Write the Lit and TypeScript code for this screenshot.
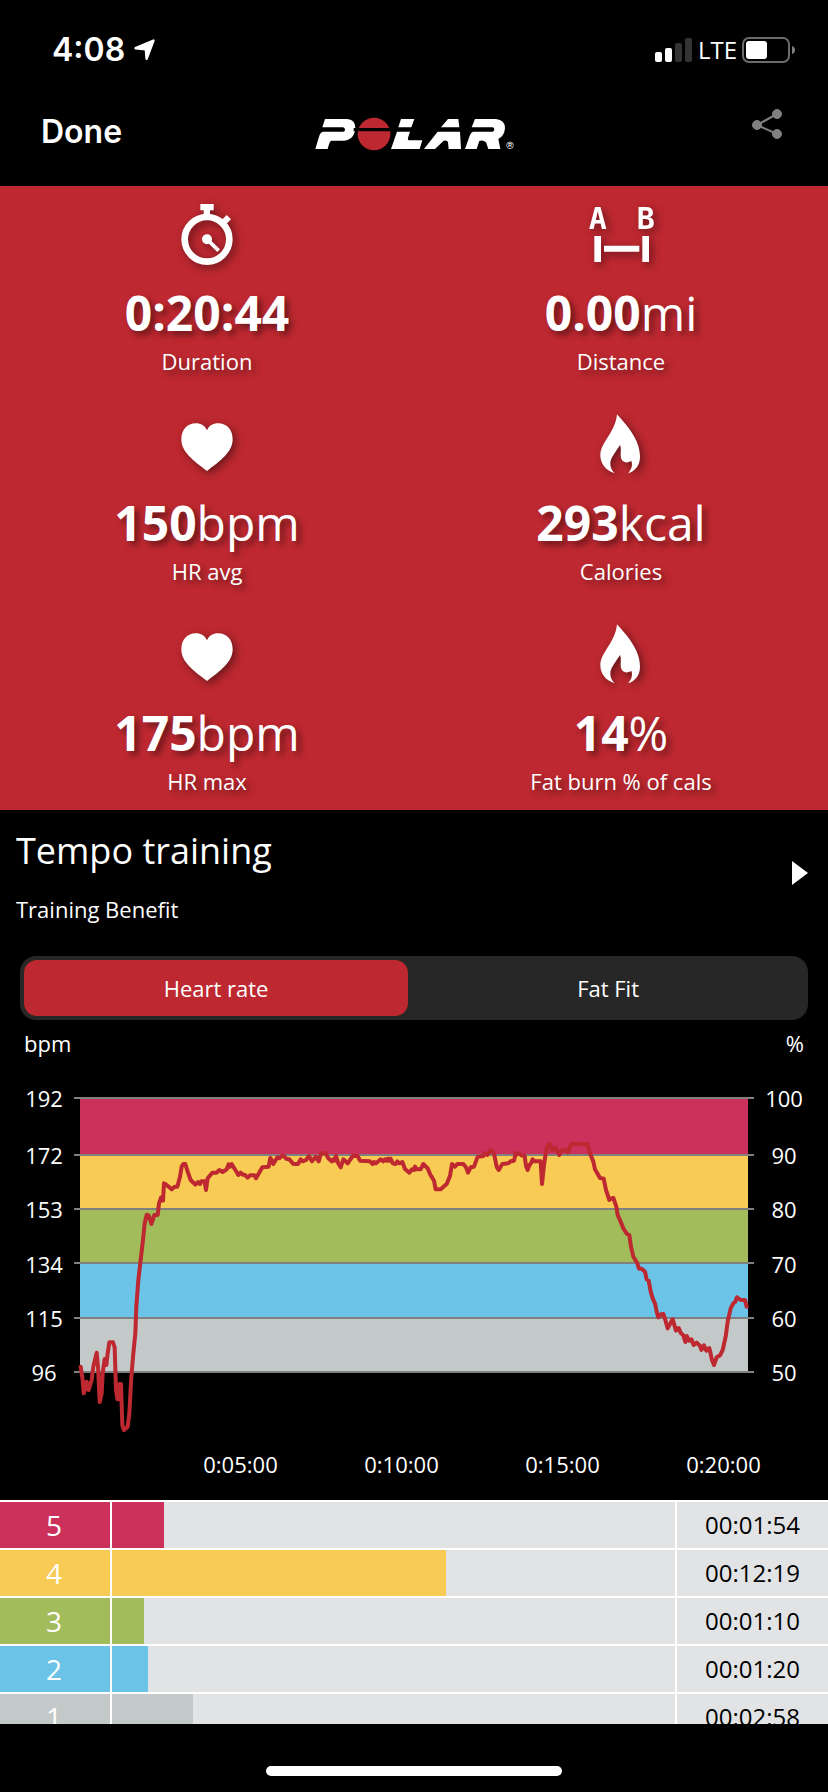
import { LitElement, html, css, svg } from "lit";
import { customElement, state } from "lit/decorators.js";

type Point = [number, number];

interface Stat {
  icon: "watch" | "distance" | "heart" | "flame";
  value: string;
  unit: string;
  label: string;
}

interface Zone {
  level: number;
  tone: string;
  seconds: number;
}

const STATS: Stat[] = [
  { icon: "watch", value: "0:20:44", unit: "", label: "Duration" },
  { icon: "distance", value: "0.00", unit: "mi", label: "Distance" },
  { icon: "heart", value: "150", unit: "bpm", label: "HR avg" },
  { icon: "flame", value: "293", unit: "kcal", label: "Calories" },
  { icon: "heart", value: "175", unit: "bpm", label: "HR max" },
  { icon: "flame", value: "14", unit: "%", label: "Fat burn % of cals" },
];

const ZONES: Zone[] = [
  { level: 5, tone: "z5", seconds: 114 },
  { level: 4, tone: "z4", seconds: 739 },
  { level: 3, tone: "z3", seconds: 70 },
  { level: 2, tone: "z2", seconds: 80 },
  { level: 1, tone: "z1", seconds: 178 },
];

const SESSION_SECONDS = 1244;
const BPM_TICKS = [192, 172, 153, 134, 115, 96];
const PERCENT_TICKS = [100, 90, 80, 70, 60, 50];
const TIME_TICKS = ["0:05:00", "0:10:00", "0:15:00", "0:20:00"];

/* Plot units: three to a pixel at the base width. */
const GRID_Y = [24, 195, 357, 519, 684, 846];

const WARM_UP: Point[] = [
  [242, 920], [248, 960], [251, 1000], [256, 985], [260, 965], [266, 990], [275, 960], [280, 920],
  [290, 878], [294, 920], [299, 1026], [305, 1000], [308, 940], [314, 897], [319, 915], [323, 880],
  [328, 847], [339, 847], [344, 862], [348, 990], [352, 1018], [357, 1018], [359, 972], [363, 972],
  [367, 1095], [372, 1110], [383, 1100], [388, 1060], [394, 950], [400, 880], [406, 820], [409, 740],
  [415, 660], [422, 600], [429, 540], [434, 490], [440, 464], [446, 466], [454, 492], [463, 465],
  [473, 465], [477, 430], [483, 413], [489, 422], [492, 370], [500, 375], [515, 388], [524, 380],
  [532, 380], [540, 350], [545, 320], [550, 312], [556, 312], [563, 335], [572, 360], [586, 374],
  [594, 366], [600, 372], [604, 364], [614, 364], [618, 390], [623, 355], [637, 338], [650, 338],
  [658, 330], [668, 336], [680, 328], [686, 313], [690, 320], [695, 312], [706, 330], [715, 345],
  [722, 338], [728, 344], [734, 344], [743, 353], [750, 346], [763, 346], [768, 355], [787, 322],
  [806, 320], [811, 294],
];

const STEADY: Point[] = [
  [4, 178], [10, 192], [22, 172], [28, 175], [35, 168], [42, 168], [48, 176], [58, 178], [70, 192],
  [84, 192], [92, 178], [98, 184], [108, 180], [117, 168], [126, 184], [137, 170], [146, 184],
  [153, 160], [167, 160], [175, 175], [185, 184], [190, 178], [193, 182], [198, 168], [204, 188],
  [212, 202], [220, 178], [233, 190], [248, 168], [263, 168], [270, 182], [300, 184], [308, 192],
  [312, 186], [318, 190], [332, 178], [340, 184], [345, 178], [350, 182], [354, 176], [357, 182],
  [362, 176], [368, 190], [377, 192], [382, 184], [388, 190], [397, 186], [405, 207], [418, 218],
  [426, 208], [432, 210], [435, 200], [440, 208], [452, 208], [460, 192], [473, 205], [480, 222],
  [492, 242], [497, 268], [512, 268], [530, 252], [540, 228], [546, 192], [555, 200], [562, 192],
  [580, 192], [588, 202], [594, 218], [602, 202], [612, 200], [623, 170], [640, 168], [643, 160],
  [652, 165], [662, 150], [672, 160], [680, 200], [686, 210], [697, 192], [715, 190], [722, 184],
];

const COOL_DOWN: Point[] = [
  [42, 182], [47, 160], [53, 163], [58, 160], [64, 166], [74, 168], [78, 198], [83, 210], [88, 195],
  [93, 190], [98, 178], [104, 184], [122, 184], [126, 252], [132, 195], [137, 160], [142, 140],
  [148, 132], [157, 150], [167, 143], [178, 165], [184, 152], [198, 150], [204, 157], [213, 132],
  [262, 132], [270, 160], [280, 185], [285, 208], [300, 234], [311, 236], [318, 270], [328, 300],
  [333, 296], [340, 294], [349, 320], [353, 345], [362, 365], [370, 385], [381, 402], [388, 405],
  [393, 440], [400, 470], [412, 490], [417, 506], [425, 506], [435, 515], [440, 538], [446, 542],
  [452, 575], [458, 595], [465, 610], [470, 635], [475, 652], [483, 643], [490, 642], [496, 660],
  [503, 685], [510, 672], [518, 658], [528, 692], [536, 684], [543, 700], [550, 706], [556, 726],
  [560, 708], [567, 722], [574, 718], [581, 735], [590, 728], [600, 737], [604, 750], [612, 736],
  [619, 752], [628, 744], [636, 780], [642, 795], [650, 772], [660, 766], [668, 750], [677, 710],
  [683, 665], [692, 625], [700, 610], [706, 605], [711, 592], [722, 600], [735, 600], [740, 620],
];

const shift = (points: Point[], dx: number, dy: number) =>
  points.map(([x, y]) => `${x + dx},${y + dy}`);

const TRACE = [
  ...shift(WARM_UP, -222, -90),
  ...shift(STEADY, 588, 30),
  ...shift(COOL_DOWN, 1278, 30),
].join(" ");

const clock = (seconds: number) =>
  [Math.floor(seconds / 3600), Math.floor(seconds / 60) % 60, seconds % 60]
    .map((part) => String(part).padStart(2, "0"))
    .join(":");

const ICONS = {
  watch: svg`
    <circle cx="135" cy="160" r="67" fill="none" stroke="#fff" stroke-width="20" />
    <path d="M115 54h40v19h-11v16h-19v-16h-10z" />
    <path d="M180 101l14-14 13 13-14 14z" />
    <circle cx="135" cy="160" r="15" />
    <path d="M135 160l35 34" stroke="#fff" stroke-width="11" />`,
  distance: svg`
    <text class="ab" x="65" y="130" text-anchor="middle">A</text>
    <text class="ab" x="209" y="130" text-anchor="middle">B</text>
    <path d="M55 150h20v78h-20zM199 150h20v78h-20zM84 179h106v18h-106z" />`,
  heart: svg`
    <path d="M135 103C128 88 117 82 102 82C75 82 58 102 58 130C58 168 94 194 135 225C176 194 212 168 212 130C212 102 195 82 168 82C153 82 142 88 135 103Z" />`,
  flame: svg`
    <path d="M123 55C150 85 192 130 192 182C192 210 176 225 156 232C166 222 171 208 166 195C148 205 134 196 134 178C134 165 136 158 132 147C118 170 103 185 103 203C103 215 108 224 116 232C90 224 73 204 73 178C73 140 118 110 123 55Z" />`,
};

@customElement("app-root")
export class AppRoot extends LitElement {
  @state() private tab = "Heart rate";

  static styles = css`
    :host {
      display: flex;
      flex-direction: column;
      height: 100vh;
      background: #000;
      color: #fff;
      font-family: "Open Sans", "Noto Sans", sans-serif;
      font-size: 22px;
      line-height: 30px;
    }
    * {
      box-sizing: border-box;
    }
    button {
      margin: 0;
      padding: 0;
      border: 0;
      background: none;
      color: inherit;
      font: inherit;
      cursor: pointer;
    }
    svg {
      display: block;
    }
    .status {
      display: flex;
      align-items: center;
      justify-content: space-between;
      height: 88px;
      padding: 12px 32px 0 52px;
    }
    .time,
    .signal {
      display: flex;
      align-items: center;
      gap: 8px;
    }
    .time {
      font: 600 32px/36px Inter, sans-serif;
    }
    .signal {
      font-size: 24px;
      font-weight: 500;
      gap: 5px;
    }
    .bar {
      display: grid;
      grid-template-columns: 1fr auto 1fr;
      align-items: center;
      height: 98px;
      padding: 0 46px 10px 41px;
    }
    .done {
      justify-self: start;
      font: 600 32px/40px Inter, sans-serif;
    }
    .share {
      justify-self: end;
    }
    .reg {
      font: 700 15px "Liberation Sans", sans-serif;
    }
    .scroll {
      flex: 1;
      min-height: 0;
      overflow-y: auto;
      scrollbar-width: none;
    }
    .stats {
      display: grid;
      grid-template-columns: 1fr 1fr;
      row-gap: 20px;
      margin: 0;
      padding-bottom: 14px;
      background: #be2830;
    }
    .stat {
      display: flex;
      flex-direction: column;
      align-items: center;
    }
    .icon {
      fill: #fff;
      filter: drop-shadow(3px 3px 4px rgba(0, 0, 0, 0.45));
    }
    .ab {
      font: 700 90px "DejaVu Sans Mono", monospace;
    }
    .value {
      order: 1;
      margin: 7px 0 3px;
      font-size: 48px;
      line-height: 60px;
      font-weight: 700;
      text-shadow: 4px 4px 6px rgba(0, 0, 0, 0.45);
    }
    .unit {
      font-weight: 400;
    }
    .label {
      order: 2;
      text-shadow: 4px 4px 6px rgba(0, 0, 0, 0.45);
    }
    .benefit {
      display: flex;
      align-items: center;
      justify-content: space-between;
      width: 100%;
      padding: 17px 20px 32px 16px;
      text-align: left;
    }
    .benefit-text {
      display: grid;
      gap: 19px;
    }
    .benefit-name {
      font-size: 36px;
      line-height: 48px;
    }
    .tabs {
      display: flex;
      margin: 0 20px;
      padding: 4px 0 4px 4px;
      border-radius: 16px;
      background: #272727;
    }
    .tab {
      flex: 1;
      height: 56px;
      border-radius: 13px;
    }
    .tab:first-child {
      flex: 0 0 49%;
    }
    .tab[aria-pressed="true"] {
      background: #be2830;
    }
    .units {
      display: flex;
      justify-content: space-between;
      padding: 8px 24px 32px;
    }
    .chart {
      display: grid;
      grid-template-columns: 74px 1fr 74px;
    }
    .axis {
      display: grid;
      grid-template-rows: 20fr 19fr 19fr 19fr 19fr 0;
      height: 282px;
      padding: 8px 0 0 14px;
      text-align: center;
    }
    .axis.right {
      padding: 8px 14px 0 0;
    }
    .tick {
      height: 30px;
      margin-top: -15px;
    }
    .plot {
      width: 100%;
      height: 350px;
    }
    .grid-line {
      stroke: #808080;
      stroke-width: 2px;
      vector-effect: non-scaling-stroke;
    }
    .trace {
      fill: none;
      stroke: #be2830;
      stroke-width: 4px;
      stroke-linejoin: round;
      stroke-linecap: round;
      vector-effect: non-scaling-stroke;
    }
    .times {
      display: grid;
      grid-template-columns: repeat(4, 1fr);
      margin: 9px 24px 21px 160px;
      text-align: center;
    }
    .zones {
      width: 100%;
      table-layout: fixed;
      border-spacing: 0;
      background: #e2e3e5;
    }
    .zones th,
    .zones td {
      height: 48px;
      padding: 0;
      border-top: 2px solid #fff;
      font-weight: 400;
      text-align: center;
    }
    .zones .level {
      width: 112px;
      padding-right: 2px;
      border-right: 2px solid #fff;
      font-size: 28px;
      color: #fff;
    }
    .zones .duration {
      width: 153px;
      border-left: 2px solid #fff;
      font-size: 24px;
      color: #000;
    }
    .fill {
      height: 46px;
    }
    .z5 { background: #cb315b; fill: #cb315b; }
    .z4 { background: #f7cb54; fill: #f7cb54; }
    .z3 { background: #a3bc5b; fill: #a3bc5b; }
    .z2 { background: #6bc3e8; fill: #6bc3e8; }
    .z1 { background: #c3c8c8; fill: #c3c8c8; }
    .home {
      display: flex;
      justify-content: center;
      height: 68px;
      padding-top: 42px;
    }
    .handle {
      width: 296px;
      height: 10px;
      border-radius: 5px;
      background: #fff;
    }
  `;

  private renderStatus() {
    return html`
      <div class="status">
        <div class="time">
          <span>4:08</span>
          <svg width="24" height="24" viewBox="0 0 24 24" aria-hidden="true">
            <path d="M2.500 10.200L20.500 2.600L13.600 20.800L12.800 11.200Z" fill="#fff" stroke="#fff" stroke-width="2.400" stroke-linejoin="round" />
          </svg>
        </div>
        <div class="signal">
          <svg width="38" height="24" viewBox="0 0 38 24" aria-hidden="true">
            <rect x="0" y="14" width="7" height="10" rx="2" fill="#fff" />
            <rect x="10" y="10" width="7" height="14" rx="2" fill="#fff" />
            <rect x="20" y="5" width="7" height="19" rx="2" fill="#333" />
            <rect x="30" y="0" width="7" height="24" rx="2" fill="#333" />
          </svg>
          <span>LTE</span>
          <svg width="54" height="26" viewBox="0 0 54 26" aria-hidden="true">
            <rect x="1" y="1" width="46" height="24" rx="6" fill="none" stroke="#6b6b6b" stroke-width="2" />
            <rect x="4" y="4" width="21" height="18" rx="3" fill="#fff" />
            <path d="M50 9q3 1 3 4t-3 4z" fill="#808080" />
          </svg>
        </div>
      </div>
    `;
  }

  private renderBar() {
    return html`
      <header class="bar">
        <button class="done">Done</button>
        <svg width="230" height="60" viewBox="-10 -9 690 180" fill="#fff" role="img" aria-label="Polar">
          <path d="M74 42H140Q165 44 165 68Q163 105 128 107H92Q88 108 82 132H45L56 95Q60 80 70 80H128Q134 80 134 74Q134 68 128 67H66Z" />
          <circle cx="221" cy="87" r="49" fill="#be2830" />
          <path d="M160 69H282V79H160Z" fill="#000" />
          <path d="M302 42H342L333 67H294ZM290 80H329L323 98Q321 106 328 106H366L358 132H272Z" />
          <path d="M443 42H474L477 67H422ZM412 80H479L482 132H445L443 112Q441 104 430 107L404 132H371Z" />
          <path d="M524 42H587Q614 45 614 70Q612 93 594 102L600 132H564L557 112Q547 103 537 108L529 132H494L507 95Q512 80 520 80H577Q582 79 582 73Q582 68 577 67H514Z" />
          <circle cx="629" cy="121" r="10" fill="none" stroke="#fff" stroke-width="2" />
          <text class="reg" x="629" y="127" text-anchor="middle">R</text>
        </svg>
        <button class="share" aria-label="Share">
          <svg width="30" height="60" viewBox="0 0 30 60" fill="#808080" stroke="#808080">
            <path d="M25 12L5 23L25 32" fill="none" stroke-width="2" />
            <circle cx="25" cy="12" r="4.500" />
            <circle cx="5" cy="23" r="4.500" />
            <circle cx="25" cy="32" r="4.500" />
          </svg>
        </button>
      </header>
    `;
  }

  private renderChart() {
    return html`
      <div class="units"><span>bpm</span><span>%</span></div>
      <div class="chart">
        <div class="axis">${BPM_TICKS.map((t) => html`<span class="tick">${t}</span>`)}</div>
        <svg class="plot" viewBox="0 0 2040 1050" preserveAspectRatio="none" role="img" aria-label="Heart rate over time">
          ${ZONES.map((zone, i) => svg`
            <rect class=${zone.tone} x="18" y=${GRID_Y[i]} width="2004" height=${GRID_Y[i + 1] - GRID_Y[i]} />`)}
          ${GRID_Y.map((y) => svg`<line class="grid-line" x1="0" x2="2040" y1=${y} y2=${y} />`)}
          <polyline class="trace" points=${TRACE} />
        </svg>
        <div class="axis right">${PERCENT_TICKS.map((t) => html`<span class="tick">${t}</span>`)}</div>
      </div>
      <div class="times">${TIME_TICKS.map((t) => html`<span>${t}</span>`)}</div>
    `;
  }

  render() {
    return html`
      ${this.renderStatus()} ${this.renderBar()}
      <main class="scroll">
        <dl class="stats">
          ${STATS.map((s) => html`
            <div class="stat">
              <svg class="icon" width="90" height="90" viewBox="0 0 270 270" aria-hidden="true">${ICONS[s.icon]}</svg>
              <dt class="label">${s.label}</dt>
              <dd class="value">${s.value}<span class="unit">${s.unit}</span></dd>
            </div>
          `)}
        </dl>
        <button class="benefit">
          <span class="benefit-text">
            <span class="benefit-name">Tempo training</span>
            <span>Training Benefit</span>
          </span>
          <svg width="16" height="30" viewBox="0 0 16 30" aria-hidden="true"><path d="M0 0L16 12L0 24Z" fill="#fff" /></svg>
        </button>
        <div class="tabs">
          ${["Heart rate", "Fat Fit"].map((name) => html`
            <button class="tab" aria-pressed=${this.tab === name} @click=${() => (this.tab = name)}>${name}</button>
          `)}
        </div>
        ${this.renderChart()}
        <table class="zones" aria-label="Time in heart rate zones">
          <tbody>
            ${ZONES.map((zone) => html`
              <tr>
                <th class="level ${zone.tone}" scope="row">${zone.level}</th>
                <td><div class="fill ${zone.tone}" style="width:${(zone.seconds / SESSION_SECONDS) * 100}%"></div></td>
                <td class="duration">${clock(zone.seconds)}</td>
              </tr>
            `)}
          </tbody>
        </table>
      </main>
      <footer class="home"><div class="handle"></div></footer>
    `;
  }
}
